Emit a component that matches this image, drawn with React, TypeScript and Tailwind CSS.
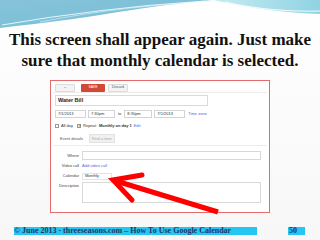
import React from "react";

function Wave() {
  return (
    <svg width="320" height="29" viewBox="0 0 320 29" className="block">
      <defs>
        <linearGradient id="wl" x1="0" y1="0" x2="1" y2="1">
          <stop offset="0" stopColor="#86c3d9" />
          <stop offset="0.6" stopColor="#7cc0d8" />
          <stop offset="1" stopColor="#4fc6de" />
        </linearGradient>
        <linearGradient id="wr" x1="0" y1="0" x2="1" y2="0">
          <stop offset="0" stopColor="#c7ecf2" />
          <stop offset="1" stopColor="#8fd3e2" />
        </linearGradient>
      </defs>
      <path d="M0,0 H212 C180,3 140,8 100,15 C60,21 25,25 0,28 Z" fill="url(#wl)" />
      <path d="M2,25 C60,15 130,6 205,1" stroke="#ffffff" strokeWidth="1.2" fill="none" opacity="0.8" />
      <path d="M40,22 C100,10 160,4 230,0" stroke="#e6f6fa" strokeWidth="0.8" fill="none" opacity="0.7" />
      <path d="M214,0 H320 V14 C290,13 250,9 214,0 Z" fill="url(#wr)" />
      <path d="M225,2 C255,9 290,12 320,11" stroke="#ffffff" strokeWidth="1" fill="none" opacity="0.9" />
    </svg>
  );
}

function Btn({ children, className }: { children?: React.ReactNode; className: string }) {
  return (
    <div className={`h-[8px] flex items-center justify-center rounded-[1px] text-[3.5px] ${className}`}>
      {children}
    </div>
  );
}

function Field({ className, children }: { className: string; children?: React.ReactNode }) {
  return (
    <div className={`h-[8px] border border-[#d4d4d4] bg-white flex items-center px-[2px] text-[4px] text-[#333] ${className}`}>
      {children}
    </div>
  );
}

function Row({ label, children, className = "" }: { label: string; children?: React.ReactNode; className?: string }) {
  return (
    <div className={`flex items-center ${className}`}>
      <div className="w-[31px] pr-[3px] text-right text-[4px] text-[#444]">{label}</div>
      {children}
    </div>
  );
}

function CalendarShot() {
  return (
    <div className="ml-[50px] mt-[9px] w-[220px] h-[133px] border border-[#e36b6b] bg-white flex flex-col">
      <div className="flex items-center gap-[3px] pl-[4px] pt-[2px] h-[11px]">
        <Btn className="w-[20px] bg-[#f3f3f3] border border-[#dcdcdc] text-[#555]">←</Btn>
        <Btn className="ml-[3px] w-[24px] bg-[#d14836] text-white">SAVE</Btn>
        <Btn className="w-[20px] bg-[#f3f3f3] border border-[#dcdcdc] text-[#555]">Discard</Btn>
      </div>
      <div className="mx-[2px] border-t border-[#ececec]" />
      <div className="ml-[4px] mt-[2px] w-[153px] h-[11px] border border-[#dadada] flex items-center px-[2px] text-[5.5px] font-bold text-[#222]">
        Water Bill
      </div>
      <div className="ml-[4px] mt-[4px] flex items-center gap-[2px]">
        <Field className="w-[31px]">7/1/2013</Field>
        <Field className="w-[27px]">7:30pm</Field>
        <span className="text-[4px] text-[#444] px-[1px]">to</span>
        <Field className="w-[28px]">8:30pm</Field>
        <Field className="w-[31px]">7/1/2013</Field>
        <span className="ml-[1px] text-[4px] text-[#3b6fd6]">Time zone</span>
      </div>
      <div className="ml-[4px] mt-[4px] h-[8px] flex items-center gap-[2px] text-[4px] text-[#333]">
        <span className="w-[4px] h-[4px] border border-[#999] bg-white" />
        <span>All day</span>
        <span className="ml-[2px] w-[4px] h-[4px] border border-[#999] bg-white text-[3.5px] leading-[3px] text-center">✓</span>
        <span>Repeat:</span>
        <span className="font-bold">Monthly on day 1</span>
        <span className="text-[#3b6fd6]">Edit</span>
      </div>
      <div className="ml-[9px] mt-[4px] h-[9px] flex items-center gap-[6px] text-[4px] text-[#555]">
        <span>Event details</span>
        <span className="w-[26px] h-[9px] bg-[#f1f1f1] border border-[#e2e2e2] flex items-center justify-center text-[#aaa]">
          Find a time
        </span>
      </div>
      <div className="mx-[2px] mt-[2px] border-t border-[#ececec]" />
      <Row label="Where" className="mt-[5px]">
        <div className="w-[179px] h-[9px] border border-[#d8d8d8] bg-white" />
      </Row>
      <Row label="Video call" className="mt-[2px] h-[8px]">
        <span className="text-[4px] text-[#3b6fd6]">Add video call</span>
      </Row>
      <Row label="Calendar" className="mt-[2px] h-[8px]">
        <div className="w-[30px] h-[7px] border border-[#e4e4e4] flex items-center px-[2px] text-[4px] text-[#333]">
          Monthly
        </div>
      </Row>
      <div className="flex items-start mt-[2px]">
        <div className="w-[31px] pr-[3px] pt-[1px] text-right text-[4px] text-[#444]">Description</div>
        <div className="w-[179px] h-[21px] border border-[#d8d8d8] bg-white" />
      </div>
    </div>
  );
}

export default function App() {
  return (
    <div
      className="relative w-[320px] h-[240px] overflow-hidden bg-gradient-to-b from-white to-[#f7f7f7]"
      style={{ fontFamily: "'Liberation Sans', Arial, sans-serif" }}
    >
      <Wave />
      <div
        className="text-center text-[17px] leading-[21px] font-bold text-[#111]"
        style={{ fontFamily: "'Liberation Serif', 'DejaVu Serif', serif" }}
      >
        <div>This screen shall appear again. Just make</div>
        <div>sure that monthly calendar is selected.</div>
      </div>
      <CalendarShot />
      <div
        className="mt-[14px] flex items-center h-[8px] text-[8px] font-bold text-[#1f3864]"
        style={{ fontFamily: "'Liberation Serif', 'DejaVu Serif', serif" }}
      >
        <div className="ml-[14px] w-[243px] h-[8px] bg-[#25c6f1] flex items-center whitespace-nowrap leading-none">
          © June 2013 - threeseasons.com – How To Use Google Calendar
        </div>
        <div className="ml-[31px] w-[17px] h-[8px] bg-[#25c6f1] flex items-center pl-[1px] leading-none">50</div>
      </div>
      <svg className="absolute left-0 top-0" width="320" height="240" viewBox="0 0 320 240">
        <path d="M218,212 L116,181" stroke="#ff0000" strokeWidth="5" strokeLinecap="butt" fill="none" />
        <path d="M142,175 L113,180 L132,200" stroke="#ff0000" strokeWidth="5" strokeLinejoin="miter" strokeLinecap="round" fill="none" />
      </svg>
    </div>
  );
}
